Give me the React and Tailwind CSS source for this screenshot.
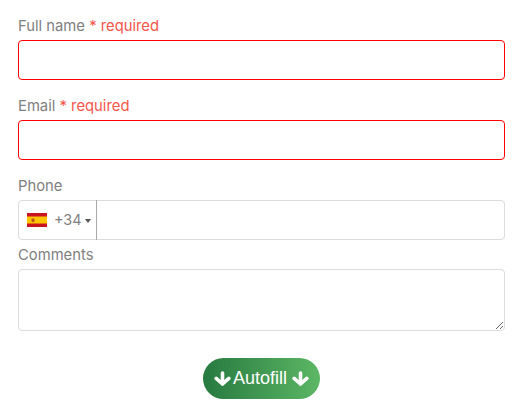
import React from 'react';

function Label({ text, required }) {
  return (
    <label className="block h-[21px] text-[14.8px] leading-[21px] text-[#808080]">
      {text}
      {required && <span className="text-[#f5554a]"> * required</span>}
    </label>
  );
}

function SpainFlag() {
  return (
    <svg width="20" height="14" viewBox="0 0 20 14" className="block">
      <rect width="20" height="14" fill="#c8141e" />
      <rect y="3.5" width="20" height="7" fill="#fbc400" />
      <rect x="4.5" y="5.5" width="3" height="3.5" rx="1" fill="#c0501e" />
    </svg>
  );
}

function ArrowDown({ className }) {
  return (
    <svg width="17" height="15" viewBox="0 0 17 15" className={className} fill="none" stroke="white" strokeWidth="3.6" strokeLinecap="round" strokeLinejoin="round">
      <path d="M8.5 2V12.8" />
      <path d="M2.2 7.4L8.5 13L14.8 7.4" />
    </svg>
  );
}

export default function App() {
  return (
    <div className="bg-white w-[524px] h-[412px] px-[18px] pt-[16px] font-['Inter',sans-serif]">
      <div className="w-[487px]">
        <Label text="Full name" required />
        <input className="block w-full h-10 mt-[3px] rounded border border-[#f00] outline-none" />

        <div className="mt-[16px]">
          <Label text="Email" required />
          <input className="block w-full h-10 mt-[3px] rounded border border-[#f00] outline-none" />
        </div>

        <div className="mt-[16px]">
          <Label text="Phone" />
          <div className="flex h-10 mt-[3px] rounded border border-[#dcdcdc]">
            <div className="flex items-center w-[78px] h-10 -mt-px border-r border-[#aaa] pl-2">
              <SpainFlag />
              <span className="ml-[7px] text-[14.4px] text-[#808080]">+34</span>
              <span className="ml-[3px] mt-px border-x-[3px] border-t-[4px] border-x-transparent border-t-[#555]"></span>
            </div>
            <input className="flex-1 min-w-0 outline-none" />
          </div>
        </div>

        <div className="mt-[5px]">
          <Label text="Comments" />
          <textarea className="block w-full h-[62px] mt-[3px] rounded border border-[#dcdcdc] outline-none"></textarea>
        </div>

        <div className="flex justify-center mt-[27px]">
          <button className="flex items-center w-[117px] h-[41px] pl-[11px] rounded-full text-white text-[18px] font-['Liberation_Sans',sans-serif] bg-gradient-to-r from-[#267a40] to-[#5cb765]">
            <ArrowDown />
            <span className="ml-[2px]">Autofill</span>
            <ArrowDown className="ml-[5px]" />
          </button>
        </div>
      </div>
    </div>
  );
}
